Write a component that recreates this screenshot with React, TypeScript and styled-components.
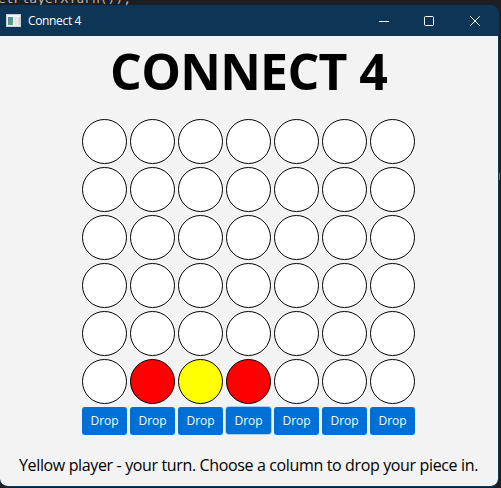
import React from 'react';
import styled, { createGlobalStyle } from 'styled-components';

const GlobalStyle = createGlobalStyle`
  * { box-sizing: border-box; }
  body { margin: 0; background: #1d1e21; overflow: hidden; }
`;

const Desktop = styled.div`
  position: relative;
  width: 501px;
  height: 488px;
  padding-top: 5px;
  overflow: hidden;
  background: #1d1e21;
`;

const EditorLine = styled.div`
  position: absolute;
  left: -2px;
  top: -9px;
  font: 13px/16px 'DejaVu Sans Mono', monospace;
  color: #b4b6bb;
  white-space: pre;
`;

const EditorMark = styled.div`
  position: absolute;
  left: 499px;
  top: 173px;
  width: 1px;
  height: 7px;
  background: #7d6c5c;
`;

const Window = styled.main`
  position: relative;
  display: flex;
  flex-direction: column;
  width: 499px;
  height: 482px;
  border-radius: 4px 8px 8px 8px;
  border-right: 1px solid #0c3556;
  border-bottom: 1px solid #0c3556;
  background: #0c3556;
  overflow: hidden;
`;

const TitleBar = styled.header`
  display: flex;
  align-items: center;
  height: 31px;
  flex: none;
  padding-left: 6px;
  background: #0c3556;
  color: #fff;
`;

const WindowTitle = styled.span`
  flex: 1;
  margin-left: 7px;
  font: 12px/16px 'Open Sans', 'Noto Sans', sans-serif;
  letter-spacing: -0.35px;
`;

const Control = styled.span<{ $width?: number }>`
  display: flex;
  flex: none;
  width: ${({ $width = 46 }) => $width}px;
  justify-content: center;
  svg { display: block; }
`;

const Client = styled.section`
  flex: 1;
  display: flex;
  flex-direction: column;
  align-items: center;
  padding-right: 1px;
  background: #f3f3f3;
  border-radius: 0 0 7px 7px;
`;

const Heading = styled.h1`
  margin: 0;
  height: 83px;
  font: 700 50px/70px 'Open Sans', 'Noto Sans', sans-serif;
  letter-spacing: -0.7px;
  color: #000;
  white-space: nowrap;
`;

const Board = styled.div`
  display: grid;
  grid-template-columns: repeat(7, 45px);
  grid-auto-rows: 45px;
  gap: 3px;
`;

type Piece = 'empty' | 'red' | 'yellow';
const fills: Record<Piece, string> = { empty: '#fff', red: '#ff0000', yellow: '#ffff00' };

const Slot = styled.div<{ $piece: Piece }>`
  border: 1px solid #000;
  border-radius: 50%;
  background: ${({ $piece }) => fills[$piece]};
`;

const DropRow = styled.div`
  display: grid;
  grid-template-columns: repeat(7, 45px);
  gap: 3px;
  margin-top: 3px;
`;

const DropButton = styled.button<{ $active: boolean }>`
  height: 28px;
  padding: 0;
  border: 0;
  border-radius: 3px;
  background: #0070d6;
  color: #fff;
  font: 12px/28px 'Open Sans', 'Noto Sans', sans-serif;
  letter-spacing: -0.1px;
  ${({ $active }) => $active && `
    height: 27px;
    line-height: 28px;
    box-shadow: 0 0 0 1px #a9cff0;
  `}
`;

const Status = styled.p`
  margin: 18px 0 0;
  font: 16px/24px 'Open Sans', 'Noto Sans', sans-serif;
  letter-spacing: -0.36px;
  color: #000;
  white-space: nowrap;
`;

const rows: Piece[][] = [
  ...Array.from({ length: 5 }, () => Array<Piece>(7).fill('empty')),
  ['empty', 'red', 'yellow', 'red', 'empty', 'empty', 'empty'],
];

function AppIcon() {
  return (
    <svg width="15" height="13" viewBox="0 0 15 13" shapeRendering="crispEdges">
      <defs>
        <linearGradient id="pane" x1="0" y1="0" x2="1" y2="1">
          <stop offset="0" stopColor="#4d83aa" />
          <stop offset="1" stopColor="#55aa70" />
        </linearGradient>
      </defs>
      <rect width="15" height="13" fill="#c9ccd0" />
      <rect x="1" y="1" width="13" height="11" fill="#f4f4f4" />
      <rect x="2" y="3" width="5" height="8" fill="url(#pane)" />
      <rect x="8" y="3" width="3" height="8" fill="#e1e3e5" />
      <rect x="12" y="3" width="2" height="8" fill="#d2d5d8" />
    </svg>
  );
}

export default function App() {
  return (
    <>
      <GlobalStyle />
      <Desktop>
        <EditorLine>etPlayerXTurn());</EditorLine>
        <Window>
          <TitleBar>
            <AppIcon />
            <WindowTitle>Connect 4</WindowTitle>
            <Control $width={44}>
              <svg width="10" height="10"><path d="M0 5.5H10" stroke="#fff" /></svg>
            </Control>
            <Control>
              <svg width="10" height="10"><rect x=".5" y=".5" width="9" height="9" rx="1" fill="none" stroke="#fff" /></svg>
            </Control>
            <Control>
              <svg width="10" height="10"><path d="M.3 .3L9.7 9.7M9.7 .3L.3 9.7" stroke="#fff" /></svg>
            </Control>
          </TitleBar>
          <Client>
            <Heading>CONNECT 4</Heading>
            <Board>
              {rows.flatMap((row, r) => row.map((piece, c) => <Slot key={`${r}-${c}`} $piece={piece} />))}
            </Board>
            <DropRow>
              {rows[0].map((_, c) => <DropButton key={c} $active={c === 3}>Drop</DropButton>)}
            </DropRow>
            <Status>Yellow player - your turn. Choose a column to drop your piece in.</Status>
          </Client>
        </Window>
        <EditorMark />
      </Desktop>
    </>
  );
}
